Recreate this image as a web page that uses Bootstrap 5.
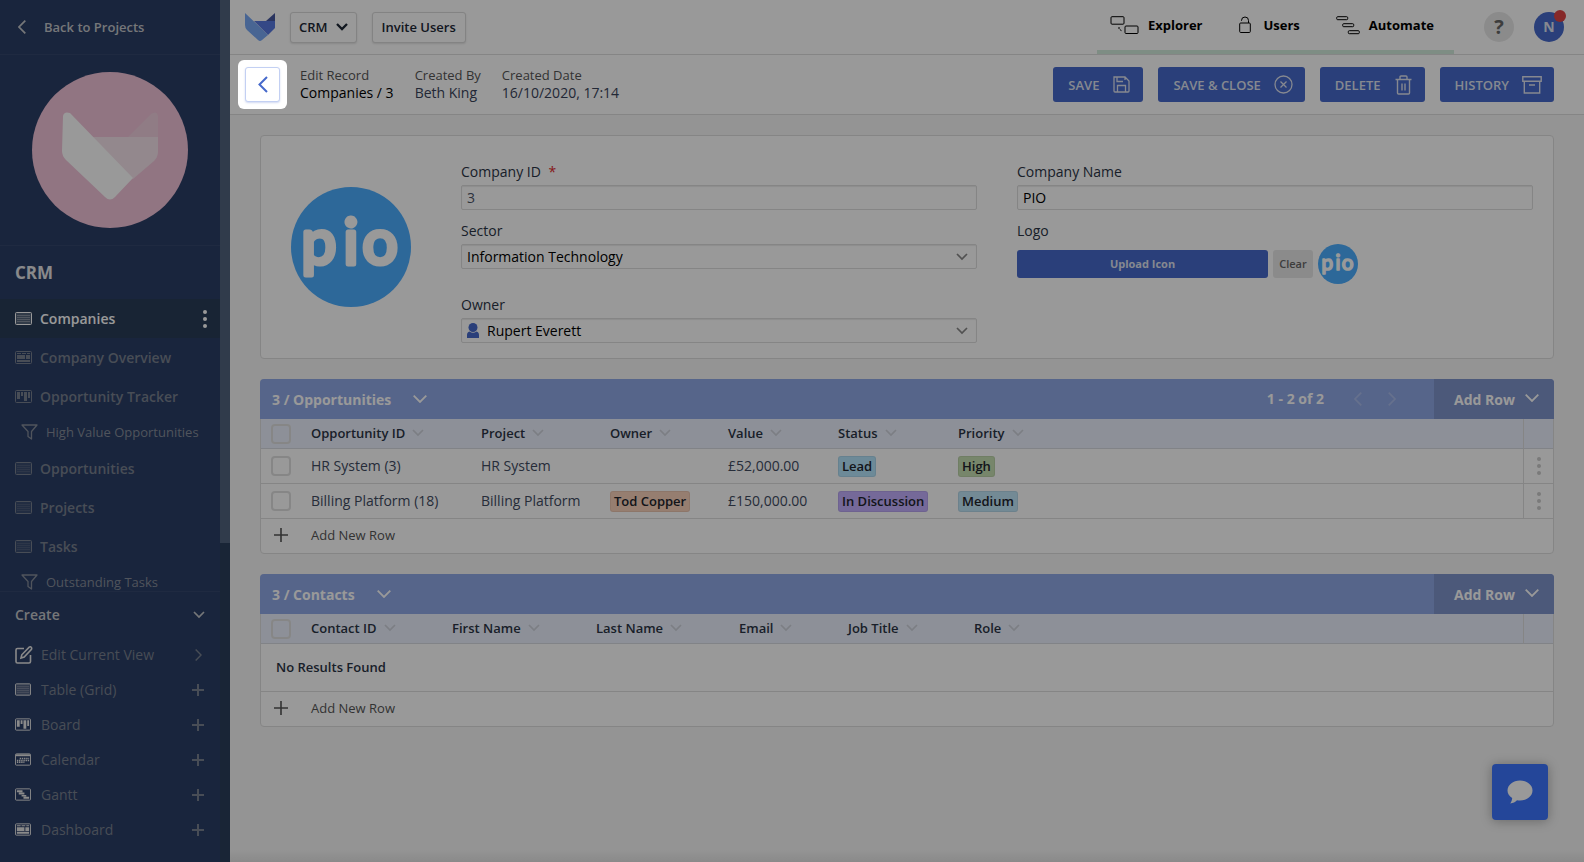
<!DOCTYPE html>
<html lang="en">
<head>
<meta charset="utf-8">
<meta name="viewport" content="width=device-width, initial-scale=1">
<title>CRM - Companies / 3</title>
<link href="https://cdn.jsdelivr.net/npm/bootstrap@5.3.0/dist/css/bootstrap.min.css" rel="stylesheet">
<style>
:root{--navy:#2b3e66;--brand:#4669cb;--line:#dedede;--ink:#2b3445}
body{font-family:"Open Sans",sans-serif;font-size:14px;line-height:20px;color:var(--ink);background:#f7f7f7}
svg{display:block;flex:none}
svg.line{fill:none;stroke:currentColor}
a{color:inherit;text-decoration:none}
button{color:inherit}
.plain{border:0;background:none;padding:0}
/* sidebar */
.side{width:230px;background:var(--navy);color:#9097a3}
.side-main{min-width:0}
.side-back{height:55px;border-bottom:1px solid #34476d;font-size:13px;font-weight:600;color:#c4c6ca;padding:0 18px;gap:18px}
.side-logo{height:191px;border-bottom:1px solid #34476d}
.side h1{font-size:17px;line-height:24px;font-weight:700;color:#e4e5e8;margin:0;padding:15px 15px 14px}
.side-list{overflow:hidden;min-height:0}
.side-list a{flex:none;height:39px;padding:0 15px;gap:8px;font-weight:600;color:#78818f}
.side-list a.current{background:#293d58;color:#fff;padding-right:13px}
.side-list a.filter{height:33px;font-size:13px;font-weight:500;padding:0 0 2px 21px;gap:8px;color:#858d9a}
.side-create{border-top:1px solid #34476d;padding-bottom:15px}
.side-create .head{height:45px;padding:0 15px;font-weight:600;color:#c4c6ca}
.side-create .item{height:35px;padding:0 16px 0 15px;gap:10px;color:#78818f}
.side-create .item svg:first-child{color:#e6e6e6}
.side-create .item span{flex:1;text-align:left}
.side-create .edit{gap:8px;padding-right:18px}
.scroll-track{width:10px;background:#2b3f5a}
.scroll-thumb{height:63%;background:#50637e}
/* top bars */
.work{min-width:0;background:linear-gradient(to top,#e6e6e6,#f7f7f7 12px)}
.topbar{height:55px;background:#fff;border-bottom:1px solid var(--line);padding:0 20px 0 15px}
.topbar-start{gap:15px}
.btn-top{height:31px;border:1px solid #dadada;border-radius:3px;background:#fff;box-shadow:0 1px 2px rgba(0,0,0,.12);padding:0 8px;font-size:13px;line-height:20px;font-weight:600;color:#1d2735}
.btn-invite{padding:0 9px;font-size:13px}
.modes{align-self:stretch;border-bottom:4px solid #d2ecdc;padding:0 20px 0 13px;color:#000;font-size:13px;font-weight:700;gap:36px}
.modes a{gap:13px}
.modes a:first-child,.modes a:last-child{gap:9px}
.topbar-tools{gap:20px;margin-left:30px}
.round{width:30px;height:30px;border-radius:50%;position:relative}
.help{background:#e8e8e8;color:#666;font-size:20px;font-weight:700}
.user{background:var(--brand);color:#dfe3f0;font-weight:700}
.dot{position:absolute;right:-2px;top:-2px;width:12px;height:12px;border-radius:50%;background:#e04343}
.recordbar{height:60px;background:#fff;border-bottom:1px solid var(--line);padding:0 30px 0 8px}
/* guided-tour spotlight: dims everything outside it */
.spotlight{position:relative;z-index:1050;padding:7px;border-radius:6px;background:#fff;box-shadow:0 0 0 3000px rgba(0,0,0,.4)}
.btn-back{width:35px;height:35px;border:1px solid #c3d0f3;border-radius:3px;background:#fff;color:var(--brand);box-shadow:0 1px 2px rgba(70,105,203,.25)}
.meta{margin-left:13px;gap:21px;padding-bottom:2px}
.meta-item{line-height:18px;color:#39435a}
.meta-item small{font-size:13px;font-weight:500;display:block;color:#555}
.actions{gap:15px}
.btn-act{height:35px;border-radius:3px;background:var(--brand);color:#dfe3f0;font-size:13px;font-weight:600;line-height:20px;padding:0 11px 0 14px;gap:13px}
.btn-act:hover{background:#3c5dbb;color:#fff}
/* panels */
.page-body{padding:20px 30px}
.panel{background:#fff;border:1px solid var(--line);border-radius:4px;margin-bottom:20px}
.record{padding:26px 20px 15px 30px;gap:50px}
.record-logo{margin-top:25px}
.fields{flex:1;display:grid;grid-template-columns:1fr 1fr;column-gap:40px}
.field{height:59px}
.field.tall{height:74px}
.field.short{height:48px}
.field label{display:block;line-height:20px;margin-bottom:3px;font-weight:500;color:var(--ink)}
.required{color:#e02b2b}
.box{height:25px;width:100%;border:1px solid var(--line);border-radius:2px;background:#fff;box-shadow:inset 0 1px 1px rgba(0,0,0,.08);padding:0 5px;font-size:14px;color:#000}
.box.number{color:#4c5467}
.box select{appearance:none;border:0;outline:0;background:transparent;flex:1;padding:1px 0 0;color:#000}
.box svg:last-child{color:#888;margin-right:3px}
.btn-up{height:28px;width:251px;border-radius:3px;background:var(--brand);color:#dfe3f0;font-size:11px;font-weight:700;padding:0}
.btn-clear{height:28px;width:40px;border-radius:3px;background:#e8e8e8;color:#666;font-size:11px;font-weight:600;padding:0}
.logo-row{gap:5px}
.panel-head{height:40px;margin:-1px -1px 0;border-radius:4px 4px 0 0;background:#90a8e6;color:#fff;font-weight:700;padding-left:12px;overflow:hidden}
.panel-head h2{font-size:14px;line-height:20px;font-weight:700;margin:0;padding-top:2px;color:#fff}
.panel-head .fold{margin-left:22px}
.panel-head .add{width:120px;align-self:stretch;background:#7f94cb;font-weight:700;color:#fff;gap:10px;padding:2px 0 0 5px}
.pager{gap:26px;margin-right:38px;color:#fff}
.pager .plain{color:#aabceb}
.grid{table-layout:fixed;margin:0;width:100%;border-collapse:separate;border-spacing:0}
.grid th,.grid td{padding:0 10px;border-bottom:1px solid var(--line);white-space:nowrap;text-align:left}
.grid th{height:30px;background:#ebf1fd;font-size:13px;font-weight:600;border-color:#d8dbe2}
.grid td{height:35px;color:#414b5f}
.grid th:last-child,.grid td.more{border-left:1px solid var(--line);padding:0}
.grid td.more{color:#ccc}
.grid th span{display:flex;align-items:center;gap:7px;padding-bottom:2px}
.grid th svg{color:#cfd3dc}
.grid .none{height:48px;padding:0 15px 2px;font-size:13px;font-weight:600;color:var(--ink)}
.grid .form-check-input{display:block;margin:0;width:20px;height:20px;border:2px solid #e0e0e0;border-radius:4px;background-color:transparent}
.tag{display:inline-block;height:21px;line-height:19px;padding:0 3px;border:1px solid rgba(0,0,0,.06);border-radius:3px;font-size:13px;font-weight:600;color:#20242c;vertical-align:middle}
.tag-lead{background:#b6e6fd}.tag-high{background:#c7e0b2}.tag-disc{background:#c3afff}.tag-med{background:#c0e6f8}.tag-own{background:#fbd2bb}
.add-row{height:34px;width:100%;padding:0 13px 2px;gap:23px;font-size:13px;font-weight:500;color:#555}
.chat{position:fixed;right:36px;bottom:42px;width:56px;height:56px;border-radius:4px;border:0;background:#3c76ff;color:#fff;box-shadow:0 1px 12px rgba(0,0,0,.3)}
.wordmark{font-family:Lato,sans-serif;font-size:62px;text-anchor:middle;fill:#fff;stroke:#fff;stroke-width:5;stroke-linejoin:round}
</style>
</head>
<body>
<svg width="0" height="0" class="position-absolute" aria-hidden="true">
  <symbol id="grid" viewBox="0 0 17 13"><rect x=".5" y=".5" width="16" height="12" rx="1" fill="currentColor" fill-opacity=".2" stroke="currentColor"/><path d="M2 3.500h13M2 5.500h13M2 7.500h13M2 9.500h13" stroke="currentColor" opacity=".3"/></symbol>
  <symbol id="dash" viewBox="0 0 17 13"><rect x=".5" y=".5" width="16" height="12" rx="1" fill="none" stroke="currentColor"/><path d="M2 2h4v1H2zM7 2h4v1H7zM12 2h3v1h-3zM2 4h8v4H2zM11 4h4v4h-4zM2 9h13v2H2z" fill="currentColor"/></symbol>
  <symbol id="board" viewBox="0 0 17 13"><rect x=".5" y=".5" width="16" height="12" rx="1" fill="none" stroke="currentColor"/><path d="M2 2h3v7H2zM6 2h2v4H6zM9 2h3v9H9zM13 2h2v6h-2z" fill="currentColor"/></symbol>
  <symbol id="cal" viewBox="0 0 17 13"><rect x=".5" y=".5" width="16" height="12" rx="1" fill="none" stroke="currentColor"/><path d="M1 1h15v2H1z" fill="currentColor"/><path d="M5 5.500h10M2 7.500h13M2 9.500h8" stroke="currentColor" stroke-width="1.500" stroke-dasharray="1.500 .8"/></symbol>
  <symbol id="gantt" viewBox="0 0 17 13"><rect x=".5" y=".5" width="16" height="12" rx="1" fill="none" stroke="currentColor"/><path d="M2 2h6v2H2zM4 4.500h6v2H4zM7 7h5v1.500H7zM9 9h6v2H9z" fill="currentColor"/></symbol>
  <symbol id="funnel" viewBox="0 0 17 16"><path d="M1 1h15l-5.500 6.500V15L7 12.500v-5z" fill="none" stroke="currentColor" stroke-width="1.300" stroke-linejoin="round"/></symbol>
  <symbol id="plus" viewBox="0 0 12 12"><path d="M6 0v12M0 6h12" stroke="currentColor" stroke-width="2"/></symbol>
  <symbol id="down" viewBox="0 0 14 8"><path d="M.7.7 7 7 13.300.7" fill="none" stroke="currentColor" stroke-width="1.800"/></symbol>
  <symbol id="sort" viewBox="0 0 12 8"><path d="M1 1l5 5 5-5" fill="none" stroke="currentColor" stroke-width="1.700"/></symbol>
  <symbol id="left" viewBox="0 0 8 14"><path d="M7.300.7 1 7l6.300 6.300" fill="none" stroke="currentColor" stroke-width="1.700"/></symbol>
  <symbol id="right" viewBox="0 0 8 14"><path d="M.7.7 7 7 .7 13.300" fill="none" stroke="currentColor" stroke-width="1.700"/></symbol>
  <symbol id="dots" viewBox="0 0 4 18"><circle cx="2" cy="2" r="2" fill="currentColor"/><circle cx="2" cy="9" r="2" fill="currentColor"/><circle cx="2" cy="16" r="2" fill="currentColor"/></symbol>
</svg>

<div class="d-flex vh-100">
  <aside class="side d-flex flex-shrink-0">
    <div class="side-main d-flex flex-column flex-grow-1">
      <a href="#" class="side-back d-flex align-items-center flex-shrink-0">
        <svg width="8" height="14"><use href="#left"/></svg>Back to Projects
      </a>
      <div class="side-logo d-flex align-items-center justify-content-center flex-shrink-0">
        <svg width="156" height="156" viewBox="0 0 156 156" role="img" aria-label="Project logo">
          <circle cx="78" cy="78" r="78" fill="#f2c3d9"/>
          <path d="M96 65 119 42q6-4 7 2v22z" fill="#efd3df" opacity=".75"/>
          <path d="M58 65h68v15q0 5-4 9l-21 18z" fill="#f5e3eb"/>
          <path d="M31 44q1-5 7-3l63 65-18 19q-5 5-10 0L34 88q-4-4-4-9z" fill="#fff"/>
        </svg>
      </div>
      <h1>CRM</h1>
      <nav class="side-list d-flex flex-column flex-grow-1">
        <a href="#" class="current d-flex align-items-center"><svg width="17" height="13"><use href="#grid"/></svg>Companies<svg class="ms-auto" width="4" height="18"><use href="#dots"/></svg></a>
        <a href="#" class="d-flex align-items-center"><svg width="17" height="13"><use href="#dash"/></svg>Company Overview</a>
        <a href="#" class="d-flex align-items-center"><svg width="17" height="13"><use href="#board"/></svg>Opportunity Tracker</a>
        <a href="#" class="filter d-flex align-items-center"><svg width="17" height="16"><use href="#funnel"/></svg>High Value Opportunities</a>
        <a href="#" class="d-flex align-items-center"><svg width="17" height="13"><use href="#grid"/></svg>Opportunities</a>
        <a href="#" class="d-flex align-items-center"><svg width="17" height="13"><use href="#grid"/></svg>Projects</a>
        <a href="#" class="d-flex align-items-center"><svg width="17" height="13"><use href="#grid"/></svg>Tasks</a>
        <a href="#" class="filter d-flex align-items-center"><svg width="17" height="16"><use href="#funnel"/></svg>Outstanding Tasks</a>
      </nav>
      <div class="side-create flex-shrink-0">
        <button class="plain head w-100 d-flex align-items-center justify-content-between">Create<svg width="12" height="8"><use href="#sort"/></svg></button>
        <button class="plain item edit w-100 d-flex align-items-center"><svg class="line" width="18" height="18" viewBox="0 0 18 18" stroke-width="1.600"><path d="M9 2.500H2.500q-1.500 0-1.500 1.500v11.500Q1 17 2.500 17H14q1.500 0 1.500-1.500V9M6 12l.8-3.200L14.200 1.200q1.200-.8 2 0t.3 2L9.200 11z"/></svg><span>Edit Current View</span><svg width="7" height="12"><use href="#right"/></svg></button>
        <button class="plain item w-100 d-flex align-items-center"><svg width="16" height="13"><use href="#grid"/></svg><span>Table (Grid)</span><svg width="12" height="12"><use href="#plus"/></svg></button>
        <button class="plain item w-100 d-flex align-items-center"><svg width="16" height="13"><use href="#board"/></svg><span>Board</span><svg width="12" height="12"><use href="#plus"/></svg></button>
        <button class="plain item w-100 d-flex align-items-center"><svg width="16" height="13"><use href="#cal"/></svg><span>Calendar</span><svg width="12" height="12"><use href="#plus"/></svg></button>
        <button class="plain item w-100 d-flex align-items-center"><svg width="16" height="13"><use href="#gantt"/></svg><span>Gantt</span><svg width="12" height="12"><use href="#plus"/></svg></button>
        <button class="plain item w-100 d-flex align-items-center"><svg width="16" height="13"><use href="#dash"/></svg><span>Dashboard</span><svg width="12" height="12"><use href="#plus"/></svg></button>
      </div>
    </div>
    <div class="scroll-track flex-shrink-0"><div class="scroll-thumb"></div></div>
  </aside>

  <div class="work flex-grow-1">
    <header class="topbar d-flex align-items-center">
      <div class="topbar-start d-flex align-items-center">
        <a href="#" aria-label="Home"><svg width="30" height="28" viewBox="0 0 30 28"><path d="M21 8 30 0v8z" fill="#46589f"/><path d="M9 8h21v7l-7 7z" fill="#5878e0"/><path d="M0 0l23 22-6 5q-2 2-4 0L2 17q-2-2-2-5z" fill="#78a8f5"/></svg></a>
        <button class="btn btn-top d-flex align-items-center gap-2">CRM<svg width="12" height="8" viewBox="0 0 12 8"><path d="M1 1l5 5 5-5" fill="none" stroke="currentColor" stroke-width="2.300"/></svg></button>
        <button class="btn btn-top btn-invite">Invite Users</button>
      </div>
      <nav class="modes d-flex align-items-center ms-auto">
        <a href="#" class="d-flex align-items-center"><svg class="line" width="29" height="19" viewBox="0 0 29 19"><rect x="1" y=".7" width="13" height="7.500" rx="1"/><rect x="15" y="10" width="13" height="7.500" rx="1"/><path d="M9 11v2l3 2" stroke-dasharray="2 1"/></svg>Explorer</a>
        <a href="#" class="d-flex align-items-center"><svg class="line" width="12" height="18" viewBox="0 0 12 18"><rect x=".7" y="7" width="10.600" height="9.500" rx="1"/><path d="M2.500 5V4.500a3.500 3.500 0 0 1 7 0V7"/></svg>Users</a>
        <a href="#" class="d-flex align-items-center"><svg class="line" width="24" height="19" viewBox="0 0 24 19"><rect x=".7" y=".7" width="11" height="3" rx="1"/><rect x="6.700" y="7.700" width="11" height="3" rx="1"/><rect x="12.300" y="14.700" width="11" height="3" rx="1"/></svg>Automate</a>
      </nav>
      <div class="topbar-tools d-flex">
        <button class="plain round help">?</button>
        <button class="plain round user">N<span class="dot"></span></button>
      </div>
    </header>

    <div class="recordbar d-flex align-items-center">
      <div class="spotlight"><button class="btn-back d-flex align-items-center justify-content-center p-0" aria-label="Back"><svg width="10" height="17" viewBox="0 0 10 17"><path d="M9 1 1.500 8.500 9 16" fill="none" stroke="currentColor" stroke-width="2"/></svg></button></div>
      <div class="meta d-flex">
        <div class="meta-item text-black"><small>Edit Record</small>Companies / 3</div>
        <div class="meta-item"><small>Created By</small>Beth King</div>
        <div class="meta-item"><small>Created Date</small>16/10/2020, 17:14</div>
      </div>
      <div class="actions d-flex ms-auto">
        <button class="btn btn-act d-flex align-items-center">SAVE<svg class="line" width="19" height="19" viewBox="0 0 19 19" stroke-width="1.300"><path d="M2 2h11l4 4v10q0 1-1 1H3q-1 0-1-1zM5 2v4.500h6M5.500 17v-6.500h8V17M13 2v3"/></svg></button>
        <button class="btn btn-act d-flex align-items-center">SAVE &amp; CLOSE<svg class="line" width="19" height="19" viewBox="0 0 19 19" stroke-width="1.300"><circle cx="9.500" cy="9.500" r="8.500"/><path d="m6.500 6.500 6 6m0-6-6 6"/></svg></button>
        <button class="btn btn-act d-flex align-items-center">DELETE<svg class="line" width="19" height="20" viewBox="0 0 19 20" stroke-width="1.400"><path d="M1.500 4.500h16M3.500 4.500V18q0 1 1 1h10q1 0 1-1V4.500M6 4.500V2q0-1 1-1h5q1 0 1 1v2.500M8 8.500v7M11 8.500v7"/></svg></button>
        <button class="btn btn-act d-flex align-items-center">HISTORY<svg class="line" width="20" height="18" viewBox="0 0 20 18" stroke-width="1.400"><path d="M.8.8h18.400v4.500H.8zM2.300 5.300V17h15.400V5.300M7 9h6"/></svg></button>
      </div>
    </div>

    <main class="page-body">
      <form class="panel record d-flex">
        <svg class="record-logo" width="120" height="120" viewBox="0 0 120 120"><circle cx="60" cy="60" r="60" fill="#4badff"/><text class="wordmark" x="28 60 89" y="77">pio</text></svg>
        <div class="fields">
          <div class="field"><label for="cid">Company ID <span class="required ms-1">*</span></label><input id="cid" class="box number" value="3"></div>
          <div class="field"><label for="cname">Company Name</label><input id="cname" class="box" value="PIO"></div>
          <div class="field tall"><label for="sector">Sector</label><div class="box d-flex align-items-center"><select id="sector"><option>Information Technology</option></select><svg width="12" height="8"><use href="#sort"/></svg></div></div>
          <div class="field tall"><label for="upload">Logo</label>
            <div class="logo-row d-flex align-items-center"><button id="upload" type="button" class="btn btn-up">Upload Icon</button><button type="button" class="btn btn-clear">Clear</button><svg width="40" height="40" viewBox="0 0 120 120"><circle cx="60" cy="60" r="60" fill="#4badff"/><text class="wordmark" x="28 60 89" y="77">pio</text></svg></div></div>
          <div class="field short"><label for="owner">Owner</label><div class="box d-flex align-items-center gap-2"><svg width="12" height="15" viewBox="0 0 12 15" fill="#4669cb"><circle cx="6" cy="4.500" r="4.500"/><path d="M0 15v-3q0-3 2.500-3.500Q6 11 9.500 8.500 12 9 12 12v3z"/></svg><select id="owner"><option>Rupert Everett</option></select><svg width="12" height="8"><use href="#sort"/></svg></div></div>
        </div>
      </form>

      <section class="panel">
        <div class="panel-head d-flex align-items-center"><h2>3 / Opportunities</h2><button class="plain fold" aria-label="Collapse"><svg width="14" height="8"><use href="#down"/></svg></button>
          <div class="pager ms-auto d-flex align-items-center">1 - 2 of 2<button class="plain ms-1" aria-label="Previous"><svg width="8" height="14"><use href="#left"/></svg></button><button class="plain" aria-label="Next"><svg width="8" height="14"><use href="#right"/></svg></button></div>
          <button class="plain add d-flex align-items-center justify-content-center">Add Row<svg class="mb-1" width="14" height="8"><use href="#down"/></svg></button></div>
        <table class="grid">
          <colgroup><col style="width:40px"><col style="width:170px"><col style="width:129px"><col style="width:118px"><col style="width:110px"><col style="width:120px"><col><col style="width:30px"></colgroup>
          <thead><tr><th><input class="form-check-input" type="checkbox" aria-label="Select all"></th><th><span>Opportunity ID<svg width="12" height="8"><use href="#sort"/></svg></span></th><th><span>Project<svg width="12" height="8"><use href="#sort"/></svg></span></th><th><span>Owner<svg width="12" height="8"><use href="#sort"/></svg></span></th><th><span>Value<svg width="12" height="8"><use href="#sort"/></svg></span></th><th><span>Status<svg width="12" height="8"><use href="#sort"/></svg></span></th><th><span>Priority<svg width="12" height="8"><use href="#sort"/></svg></span></th><th></th></tr></thead>
          <tbody>
            <tr><td><input class="form-check-input" type="checkbox" aria-label="Select HR System"></td><td>HR System (3)</td><td>HR System</td><td></td><td>£52,000.00</td><td><span class="tag tag-lead">Lead</span></td><td><span class="tag tag-high">High</span></td><td class="more"><button class="plain d-block mx-auto" aria-label="Row menu"><svg width="4" height="18"><use href="#dots"/></svg></button></td></tr>
            <tr><td><input class="form-check-input" type="checkbox" aria-label="Select Billing Platform"></td><td>Billing Platform (18)</td><td>Billing Platform</td><td><span class="tag tag-own">Tod Copper</span></td><td>£150,000.00</td><td><span class="tag tag-disc">In Discussion</span></td><td><span class="tag tag-med">Medium</span></td><td class="more"><button class="plain d-block mx-auto" aria-label="Row menu"><svg width="4" height="18"><use href="#dots"/></svg></button></td></tr>
          </tbody>
        </table>
        <button class="plain add-row d-flex align-items-center"><svg class="line" width="14" height="14" viewBox="0 0 14 14" stroke-width="1.600"><path d="M7 0v14M0 7h14"/></svg>Add New Row</button>
      </section>

      <section class="panel">
        <div class="panel-head d-flex align-items-center"><h2>3 / Contacts</h2><button class="plain fold" aria-label="Collapse"><svg width="14" height="8"><use href="#down"/></svg></button>
          <button class="plain add d-flex align-items-center justify-content-center ms-auto">Add Row<svg class="mb-1" width="14" height="8"><use href="#down"/></svg></button></div>
        <table class="grid">
          <colgroup><col style="width:40px"><col style="width:141px"><col style="width:144px"><col style="width:143px"><col style="width:109px"><col style="width:126px"><col><col style="width:30px"></colgroup>
          <thead><tr><th><input class="form-check-input" type="checkbox" aria-label="Select all"></th><th><span>Contact ID<svg width="12" height="8"><use href="#sort"/></svg></span></th><th><span>First Name<svg width="12" height="8"><use href="#sort"/></svg></span></th><th><span>Last Name<svg width="12" height="8"><use href="#sort"/></svg></span></th><th><span>Email<svg width="12" height="8"><use href="#sort"/></svg></span></th><th><span>Job Title<svg width="12" height="8"><use href="#sort"/></svg></span></th><th><span>Role<svg width="12" height="8"><use href="#sort"/></svg></span></th><th></th></tr></thead>
          <tbody><tr><td class="none" colspan="8">No Results Found</td></tr></tbody>
        </table>
        <button class="plain add-row d-flex align-items-center"><svg class="line" width="14" height="14" viewBox="0 0 14 14" stroke-width="1.600"><path d="M7 0v14M0 7h14"/></svg>Add New Row</button>
      </section>
    </main>
  </div>
</div>
<button class="chat d-flex align-items-center justify-content-center" aria-label="Chat"><svg width="26" height="24" viewBox="0 0 26 24" fill="currentColor"><path d="M13 .5C6 .5.500 5 .500 10.500c0 3.300 1.800 5.700 4.700 7.500-.2 2.200-.8 3.800-2 5.500 3-.5 5-1.500 6.800-3.300 1 .2 2 .3 3 .3 7 0 12.500-4.500 12.500-10S20 .5 13 .5z"/></svg></button>
<script src="https://cdn.jsdelivr.net/npm/bootstrap@5.3.0/dist/js/bootstrap.bundle.min.js"></script>
</body>
</html>
